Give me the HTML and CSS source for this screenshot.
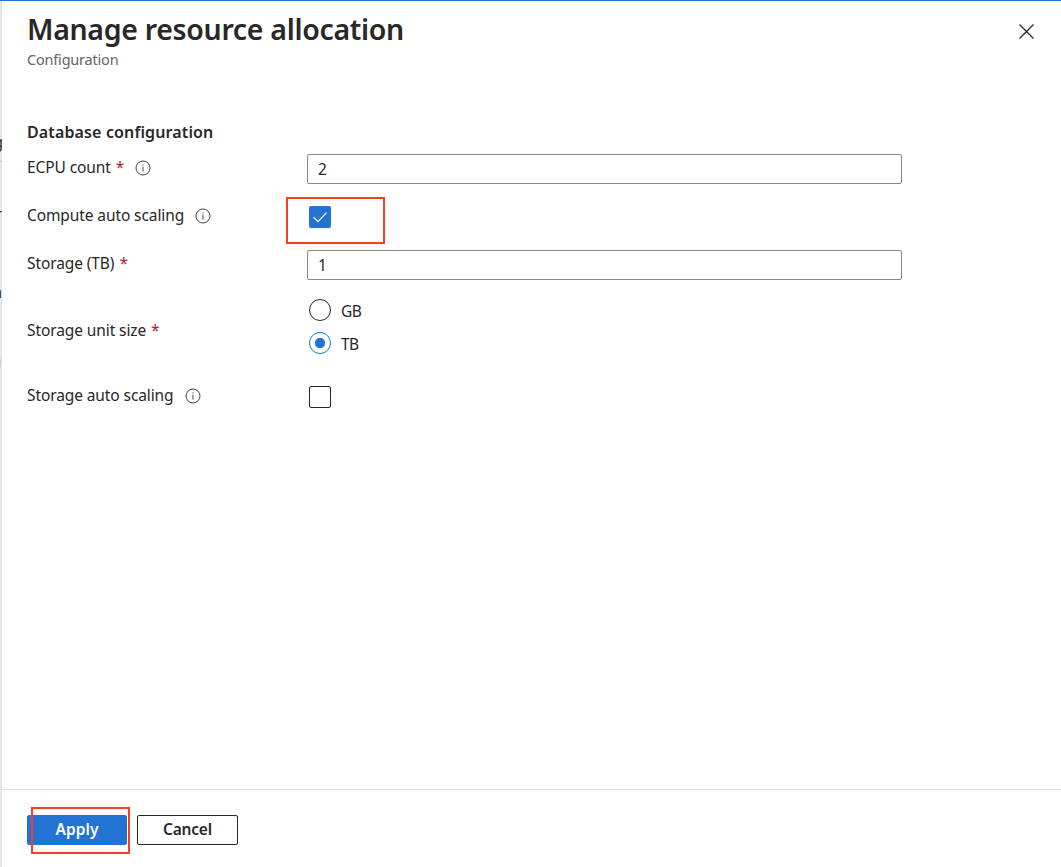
FILE: index.html
```html
<!DOCTYPE html>
<html lang="en">
<head>
<meta charset="utf-8">
<title>Manage resource allocation</title>
<link rel="stylesheet" href="styles.css">
</head>
<body>
<div class="page">
  <div class="underlay" aria-hidden="true">
    <span class="sliver sliver-g">g</span>
    <span class="sliver-line"></span>
    <span class="sliver sliver-r">r</span>
    <span class="sliver sliver-n">n</span>
    <span class="sliver-block"></span>
  </div>
  <main class="panel">
    <header class="header">
      <div>
        <h1 class="title">Manage resource allocation</h1>
        <p class="subtitle">Configuration</p>
      </div>
      <svg class="close" width="16" height="16" viewBox="0 0 16 16"><path d="M1.5 .5L15.5 14.5M15.5 .5L1.5 14.5"/></svg>
    </header>
    <section class="form">
      <h2 class="section-title">Database configuration</h2>
      <div class="row">
        <div class="label"><span>ECPU count</span><span class="required">*</span>
          <svg class="info" width="16" height="16" viewBox="0 0 16 16"><circle cx="8" cy="8" r="7"/><path d="M8 6.7V11.5M8 4.4V5.5"/></svg></div>
        <div class="input">2</div>
      </div>
      <div class="row">
        <div class="label"><span>Compute auto scaling</span>
          <svg class="info" width="16" height="16" viewBox="0 0 16 16"><circle cx="8" cy="8" r="7"/><path d="M8 6.7V11.5M8 4.4V5.5"/></svg></div>
        <div class="check-cell">
          <span class="checkbox checked"><svg width="22" height="22" viewBox="0 0 22 22"><path d="M4.5 11.2L9 15.7L17.5 6.7"/></svg></span>
          <span class="highlight highlight-check"></span>
        </div>
      </div>
      <div class="row">
        <div class="label"><span>Storage (TB)</span><span class="required">*</span></div>
        <div class="input">1</div>
      </div>
      <div class="row row-radios">
        <div class="label"><span>Storage unit size</span><span class="required">*</span></div>
        <div class="radios">
          <div class="option"><span class="radio"></span><span class="option-text">GB</span></div>
          <div class="option"><span class="radio selected"></span><span class="option-text">TB</span></div>
        </div>
      </div>
      <div class="row">
        <div class="label"><span>Storage auto scaling</span>
          <svg class="info" width="16" height="16" viewBox="0 0 16 16"><circle cx="8" cy="8" r="7"/><path d="M8 6.7V11.5M8 4.4V5.5"/></svg></div>
        <div class="check-cell"><span class="checkbox"></span></div>
      </div>
    </section>
    <footer class="footer">
      <div class="apply-wrap">
        <div class="button primary">Apply</div>
        <span class="highlight highlight-apply"></span>
      </div>
      <div class="button">Cancel</div>
    </footer>
  </main>
</div>
</body>
</html>
```
FILE: styles.css
```css
* { box-sizing: border-box; }
body {
  margin: 0;
  background: #fff;
  color: #292827;
  font-family: "Noto Sans", "Open Sans", sans-serif;
  font-size: 15.5px;
}
.page {
  display: flex;
  height: 867px;
  border-top: 1px solid #2374d2;
  overflow: hidden;
}
.underlay {
  position: relative;
  width: 2px;
  background: #e6e6e6;
  overflow: hidden;
}
.sliver { position: absolute; right: 0; line-height: 20px; color: #333; }
.sliver-g { top: 131px; right: -1px; }
.sliver-r { top: 203px; }
.sliver-n { top: 281px; right: 0; }
.sliver-line { position: absolute; top: 160px; left: 0; width: 2px; height: 1px; background: #bbb; }
.sliver-block { position: absolute; top: 358px; left: 0; width: 1px; height: 8px; background: #d2d2d2; }
.panel {
  flex: 1;
  display: flex;
  flex-direction: column;
  background: #fff;
}
.header {
  display: flex;
  justify-content: space-between;
  height: 115px;
  padding: 8px 27px 0 25px;
}
.title {
  margin: 0;
  font-size: 28.5px;
  font-weight: 600;
  line-height: 40px;
  letter-spacing: -0.32px;
}
.subtitle {
  margin: 0;
  font-size: 14.5px;
  line-height: 20px;
  color: #666;
  letter-spacing: -0.2px;
}
.close { margin-top: 15px; fill: none; stroke: #292827; stroke-width: 1.3; }
.form { flex: 1; padding: 6px 25px 0; letter-spacing: -0.1px; }
.section-title {
  margin: 0 0 12px;
  font-size: 16px;
  font-weight: 600;
  line-height: 20px;
  letter-spacing: 0.13px;
}
.row {
  display: grid;
  grid-template-columns: 280px 595px;
  height: 30px;
  margin-bottom: 18px;
}
.label { display: flex; align-items: center; height: 27px; line-height: 27px; }
.required { margin-left: 5px; color: #a4262c; }
.info { margin-left: 11.3px; fill: none; stroke: #444; stroke-width: 1; }
.input {
  height: 30px;
  padding-left: 10px;
  border: 1px solid #898887;
  border-radius: 2px;
  line-height: 29px;
}
.check-cell { position: relative; padding: 4px 0 0 2px; }
.checkbox {
  display: block;
  width: 22px;
  height: 22px;
  border: 1px solid #292827;
  border-radius: 2px;
}
.checked { border: 0; background: #2374d2; }
.checked svg { display: block; fill: none; stroke: #fff; stroke-width: 1.2; }
.highlight { position: absolute; border: 2px solid #fa3e23; }
.highlight-check { left: -21px; top: -5px; width: 99px; height: 47px; }
.row-radios { height: 64px; margin-bottom: 20px; }
.row-radios .label { margin-top: 19px; }
.radios { padding: 1px 0 0 2px; }
.option { display: flex; align-items: center; gap: 10px; height: 22px; margin-bottom: 11px; }
.option-text { padding-top: 2px; letter-spacing: -0.5px; }
.radio {
  width: 22px;
  height: 22px;
  border: 1px solid #292827;
  border-radius: 50%;
}
.selected {
  border-color: #2374d2;
  background: radial-gradient(circle, #2374d2 4.8px, transparent 5.4px);
}
.footer {
  display: flex;
  gap: 10px;
  height: 78px;
  padding: 25px 25px 0;
  border-top: 1px solid #dedede;
}
.apply-wrap { position: relative; }
.button {
  width: 101px;
  height: 30px;
  border: 1px solid #292827;
  border-radius: 2px;
  text-align: center;
  font-weight: 600;
  line-height: 27px;
  letter-spacing: -0.2px;
}
.primary { width: 100px; border-color: #2374d2; background: #2374d2; color: #fff; letter-spacing: 0.1px; }
.highlight-apply { left: 4px; top: -8px; width: 99px; height: 47px; }
```
